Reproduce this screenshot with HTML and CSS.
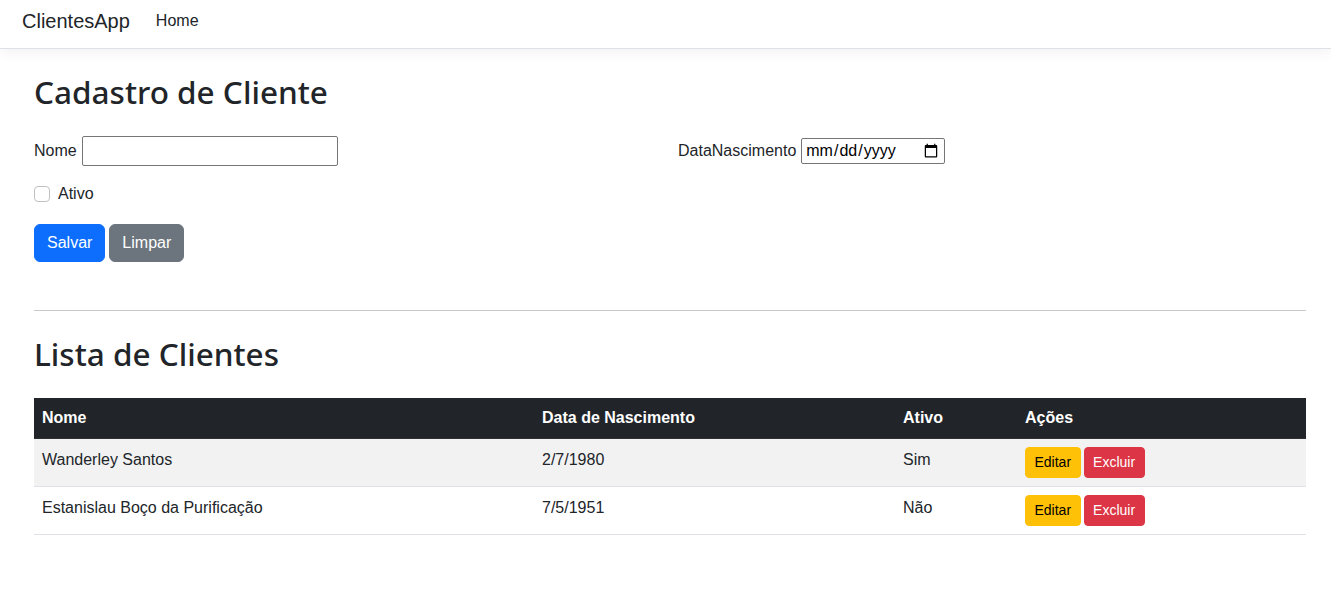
FILE: index.html
```html
<!DOCTYPE html>
<html lang="pt-BR">
<head>
<meta charset="utf-8">
<title>ClientesApp</title>
<link rel="stylesheet" href="styles.css">
</head>
<body>
<nav class="navbar">
  <a class="brand" href="#">ClientesApp</a>
  <a class="nav-link" href="#">Home</a>
</nav>
<main class="container">
  <h2 class="title">Cadastro de Cliente</h2>
  <form class="form">
    <div class="form-row">
      <div class="field">
        <label for="nome">Nome</label>
        <input id="nome" class="input-text" type="text">
      </div>
      <div class="field">
        <label for="data">DataNascimento</label>
        <input id="data" class="input-date" type="date">
      </div>
    </div>
    <div class="check-row">
      <input id="ativo" class="check" type="checkbox">
      <label for="ativo">Ativo</label>
    </div>
    <div class="actions">
      <button type="button" class="btn btn-primary">Salvar</button>
      <button type="button" class="btn btn-secondary">Limpar</button>
    </div>
  </form>
  <hr class="divider">
  <h2 class="title">Lista de Clientes</h2>
  <table class="table">
    <thead>
      <tr>
        <th class="c-nome">Nome</th>
        <th class="c-data">Data de Nascimento</th>
        <th class="c-ativo">Ativo</th>
        <th class="c-acoes">Ações</th>
      </tr>
    </thead>
    <tbody>
      <tr class="striped">
        <td>Wanderley Santos</td>
        <td>2/7/1980</td>
        <td>Sim</td>
        <td><div class="row-actions"><button class="btn-sm btn-warning">Editar</button><button class="btn-sm btn-danger">Excluir</button></div></td>
      </tr>
      <tr>
        <td>Estanislau Boço da Purificação</td>
        <td>7/5/1951</td>
        <td>Não</td>
        <td><div class="row-actions"><button class="btn-sm btn-warning">Editar</button><button class="btn-sm btn-danger">Excluir</button></div></td>
      </tr>
    </tbody>
  </table>
</main>
</body>
</html>
```

FILE: styles.css
```css
* { box-sizing: border-box; }
html, body { margin: 0; }
body {
  font-family: "Liberation Sans", Arial, sans-serif;
  font-size: 16px;
  line-height: 1.5;
  color: #212529;
  background: #fff;
}
.navbar {
  display: flex;
  align-items: flex-start;
  height: 49px;
  padding: 6px 0 0 22px;
  background: #fff;
  border-bottom: 1px solid #dee2e6;
  box-shadow: 0 4px 12px rgba(0,0,0,.05);
}
.brand {
  font-size: 20px;
  line-height: 30px;
  color: #212529;
  text-decoration: none;
  margin-right: 26px;
}
.nav-link {
  font-size: 16px;
  line-height: 30px;
  color: #212529;
  text-decoration: none;
}
.container {
  padding: 24px 25px 40px 34px;
}
.title {
  font-family: "Noto Sans", "Liberation Sans", sans-serif;
  font-size: 31.5px;
  font-weight: 500;
  line-height: 38px;
  margin: 0 0 25px;
}
.form-row {
  display: grid;
  grid-template-columns: 644px 1fr;
  height: 30px;
  margin-bottom: 16px;
}
.field {
  display: flex;
  align-items: center;
  gap: 5px;
}
.input-text {
  width: 256px;
  height: 30px;
  border: 1px solid #767676;
  border-radius: 2px;
  font: inherit;
}
.input-date {
  width: 144px;
  height: 26px;
  border: 1px solid #767676;
  border-radius: 2px;
  padding: 0 3px;
  font-family: "Liberation Sans", Arial, sans-serif;
  font-size: 16px;
  color: #000;
}
.check-row {
  display: flex;
  align-items: center;
  gap: 8px;
  height: 24px;
  margin-bottom: 18px;
}
.check {
  appearance: none;
  width: 16px;
  height: 16px;
  margin: 0;
  border: 1px solid #bfc1c4;
  border-radius: 4px;
  background: #fff;
}
.actions {
  display: flex;
  gap: 4px;
  margin-bottom: 48px;
}
.btn {
  font: inherit;
  line-height: 24px;
  padding: 6px 12px;
  border: 1px solid transparent;
  border-radius: 6px;
  color: #fff;
}
.btn-primary { background: #0d6efd; border-color: #0d6efd; }
.btn-secondary { background: #6c757d; border-color: #6c757d; }
.divider {
  margin: 0 0 24px;
  border: 0;
  border-top: 1px solid #c8c9ca;
}
.table {
  width: 100%;
  border-collapse: collapse;
  table-layout: fixed;
}
.table th, .table td {
  padding: 8px;
  text-align: left;
  vertical-align: top;
}
.table thead th {
  background: #212529;
  color: #fff;
  font-weight: 700;
  border-bottom: 1px solid #2c3034;
}
.table tbody td { border-bottom: 1px solid #dee2e6; }
.table tbody td:not(:last-child) { padding-top: 9px; padding-bottom: 7px; }
.striped td { background: #f2f2f2; }
.c-nome { width: 500px; }
.c-data { width: 361px; }
.c-ativo { width: 122px; }
.row-actions { display: flex; gap: 3px; }
.btn-sm {
  font-family: inherit;
  font-size: 14px;
  line-height: 21px;
  padding: 4px 8.5px;
  border: 1px solid transparent;
  border-radius: 4px;
}
.btn-warning { background: #ffc107; border-color: #ffc107; color: #000; }
.btn-danger { background: #dc3545; border-color: #dc3545; color: #fff; }
```
